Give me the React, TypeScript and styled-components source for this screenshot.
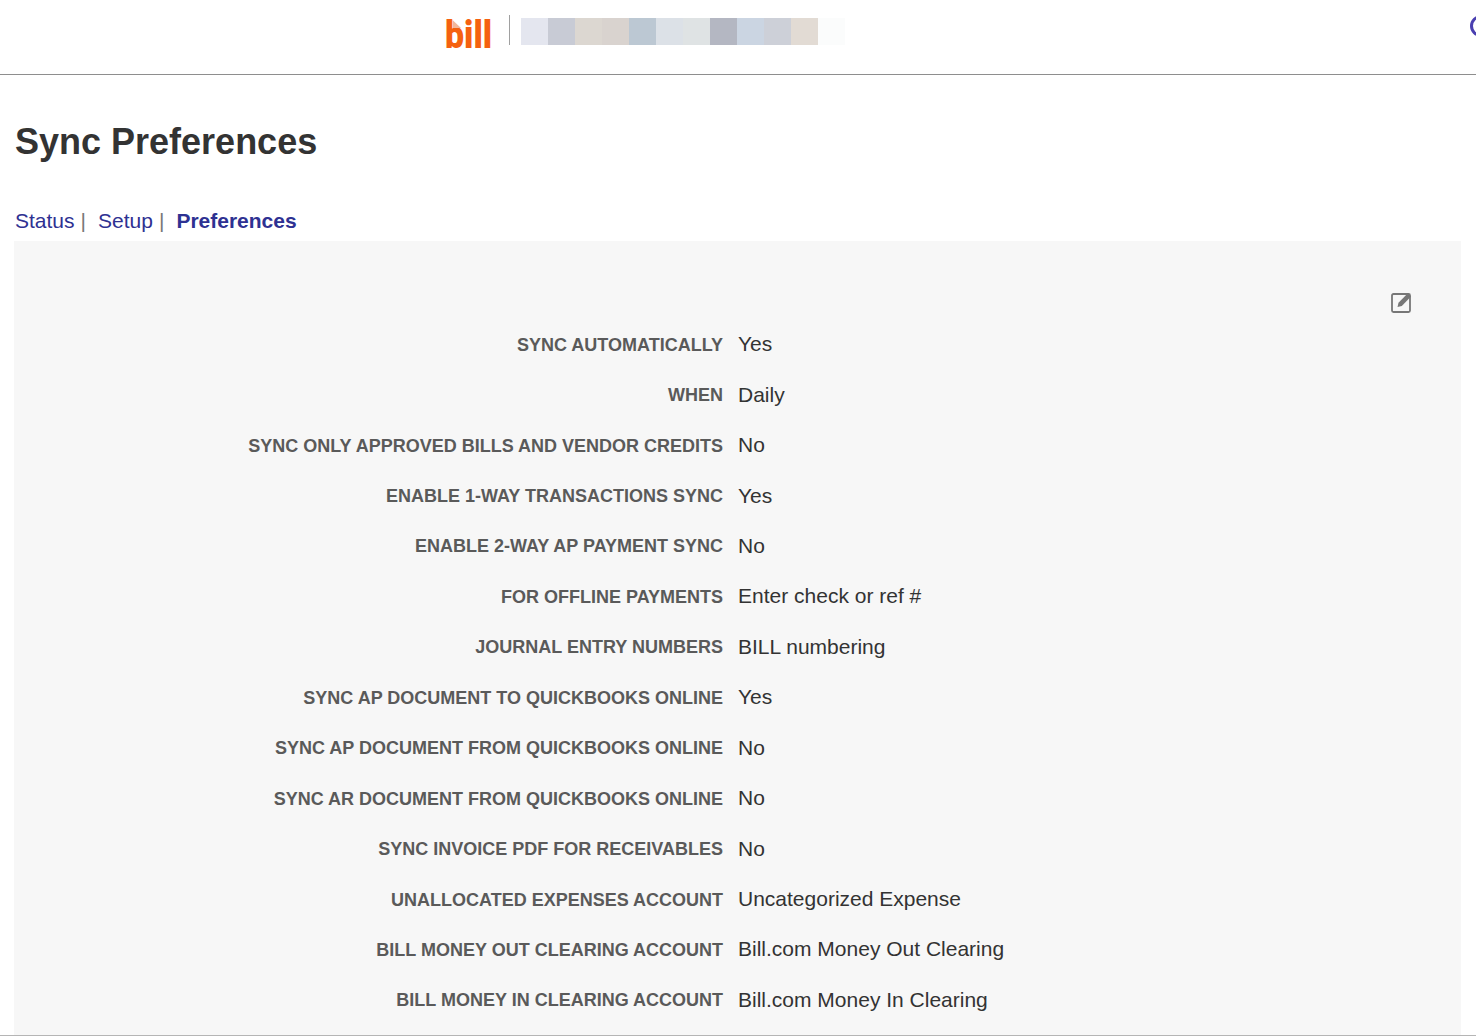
import styled, { createGlobalStyle } from "styled-components";

const preferences: [string, string][] = [
  ["SYNC AUTOMATICALLY", "Yes"],
  ["WHEN", "Daily"],
  ["SYNC ONLY APPROVED BILLS AND VENDOR CREDITS", "No"],
  ["ENABLE 1-WAY TRANSACTIONS SYNC", "Yes"],
  ["ENABLE 2-WAY AP PAYMENT SYNC", "No"],
  ["FOR OFFLINE PAYMENTS", "Enter check or ref #"],
  ["JOURNAL ENTRY NUMBERS", "BILL numbering"],
  ["SYNC AP DOCUMENT TO QUICKBOOKS ONLINE", "Yes"],
  ["SYNC AP DOCUMENT FROM QUICKBOOKS ONLINE", "No"],
  ["SYNC AR DOCUMENT FROM QUICKBOOKS ONLINE", "No"],
  ["SYNC INVOICE PDF FOR RECEIVABLES", "No"],
  ["UNALLOCATED EXPENSES ACCOUNT", "Uncategorized Expense"],
  ["BILL MONEY OUT CLEARING ACCOUNT", "Bill.com Money Out Clearing"],
  ["BILL MONEY IN CLEARING ACCOUNT", "Bill.com Money In Clearing"],
];

const blurTiles = [
  "#e4e6ef", "#c8cbd5", "#dcd7d1", "#d9d3cf", "#bcc8d3", "#dce1e7",
  "#dfe3e4", "#b4b7c2", "#cbd5e2", "#cdd0d8", "#e2dbd4", "#fbfcfc",
];

function App() {
  return (
    <Page>
      <GlobalStyle />
      <Header>
        <Logo />
        <Divider />
        <Mosaic>
          {blurTiles.map((color, i) => (
            <Tile key={i} $color={color} />
          ))}
        </Mosaic>
        <Avatar />
      </Header>
      <Title>Sync Preferences</Title>
      <Tabs>
        <Tab>Status</Tab>
        <Separator>|</Separator>
        <Tab>Setup</Tab>
        <Separator>|</Separator>
        <Tab $active>Preferences</Tab>
      </Tabs>
      <Panel>
        <Toolbar>
          <EditIcon />
        </Toolbar>
        <Rows>
          {preferences.map(([label, value]) => (
            <Row key={label}>
              <Label>{label}</Label>
              <Value>{value}</Value>
            </Row>
          ))}
        </Rows>
      </Panel>
    </Page>
  );
}

function Logo() {
  return (
    <LogoSvg width="46" height="30" viewBox="0 0 46 30">
      <text x="-1" y="29" fontFamily="Roboto, sans-serif" fontWeight="900" fontSize="38" fill="#f5610f" textLength="47" lengthAdjust="spacingAndGlyphs">
        bill
      </text>
      <polygon points="6.5,1 15,9 6.5,9" fill="#f2b79a" />
    </LogoSvg>
  );
}

function EditIcon() {
  return (
    <svg width="22" height="22" viewBox="0 0 22 22" fill="none">
      <rect x="2" y="3" width="18" height="18" rx="1.5" stroke="#777" strokeWidth="1.8" />
      <path d="M7.5 16l1-4.2L17.6 2.4l3.4 3.2-9.2 9.3z" fill="#777" />
    </svg>
  );
}

const GlobalStyle = createGlobalStyle`
  html, body {
    margin: 0;
    background: #fff;
    overflow: hidden;
  }
`;

const Page = styled.div`
  width: 1476px;
  height: 1036px;
  display: flex;
  flex-direction: column;
  overflow: hidden;
  border-bottom: 1px solid #b5b5b5;
  box-sizing: border-box;
  font-family: "Liberation Sans", Arial, sans-serif;
`;

const Header = styled.header`
  height: 75px;
  flex: none;
  box-sizing: border-box;
  border-bottom: 1px solid #8e8e8e;
  padding: 0 0 0 446px;
  display: flex;
  align-items: flex-start;
`;

const LogoSvg = styled.svg`
  margin-top: 19px;
  flex: none;
  overflow: visible;
`;

const Divider = styled.div`
  width: 1px;
  height: 30px;
  flex: none;
  margin: 15px 11px 0 17px;
  background: #a0a0a0;
`;

const Mosaic = styled.div`
  display: flex;
  flex: none;
  margin-top: 18px;
`;

const Tile = styled.div<{ $color: string }>`
  width: 27px;
  height: 27px;
  flex: none;
  background: ${(p) => p.$color};
`;

const Avatar = styled.div`
  width: 22px;
  height: 22px;
  flex: none;
  box-sizing: border-box;
  border: 3px solid #4a3fb0;
  border-radius: 50%;
  margin: 15px 0 0 625px;
`;

const Title = styled.h1`
  margin: 45px 0 0 15px;
  font-size: 36px;
  line-height: 44px;
  font-weight: 700;
  color: #333;
`;

const Tabs = styled.nav`
  display: flex;
  align-items: baseline;
  margin: 45px 0 0 15px;
  height: 32px;
  font-size: 21px;
  line-height: 24px;
`;

const Tab = styled.span<{ $active?: boolean }>`
  color: #2e3192;
  font-weight: ${(p) => (p.$active ? 700 : 400)};
`;

const Separator = styled.span`
  color: #777;
  margin: 0 12px 0 6px;
`;

const Panel = styled.main`
  flex: 1;
  margin: 0 15px 0 14px;
  background: #f7f7f7;
`;

const Toolbar = styled.div`
  display: flex;
  justify-content: flex-end;
  padding: 50px 49px 0 0;
  height: 23px;
`;

const Rows = styled.div`
  display: grid;
  grid-auto-rows: 50.45px;
  margin-top: 5px;
`;

const Row = styled.div`
  display: grid;
  grid-template-columns: 709px 1fr;
  column-gap: 15px;
  align-items: center;
`;

const Label = styled.div`
  text-align: right;
  font-size: 18px;
  font-weight: 700;
  color: #5a5a5a;
  margin-top: 2px;
`;

const Value = styled.div`
  font-size: 21px;
  color: #333;
`;

export default App;
